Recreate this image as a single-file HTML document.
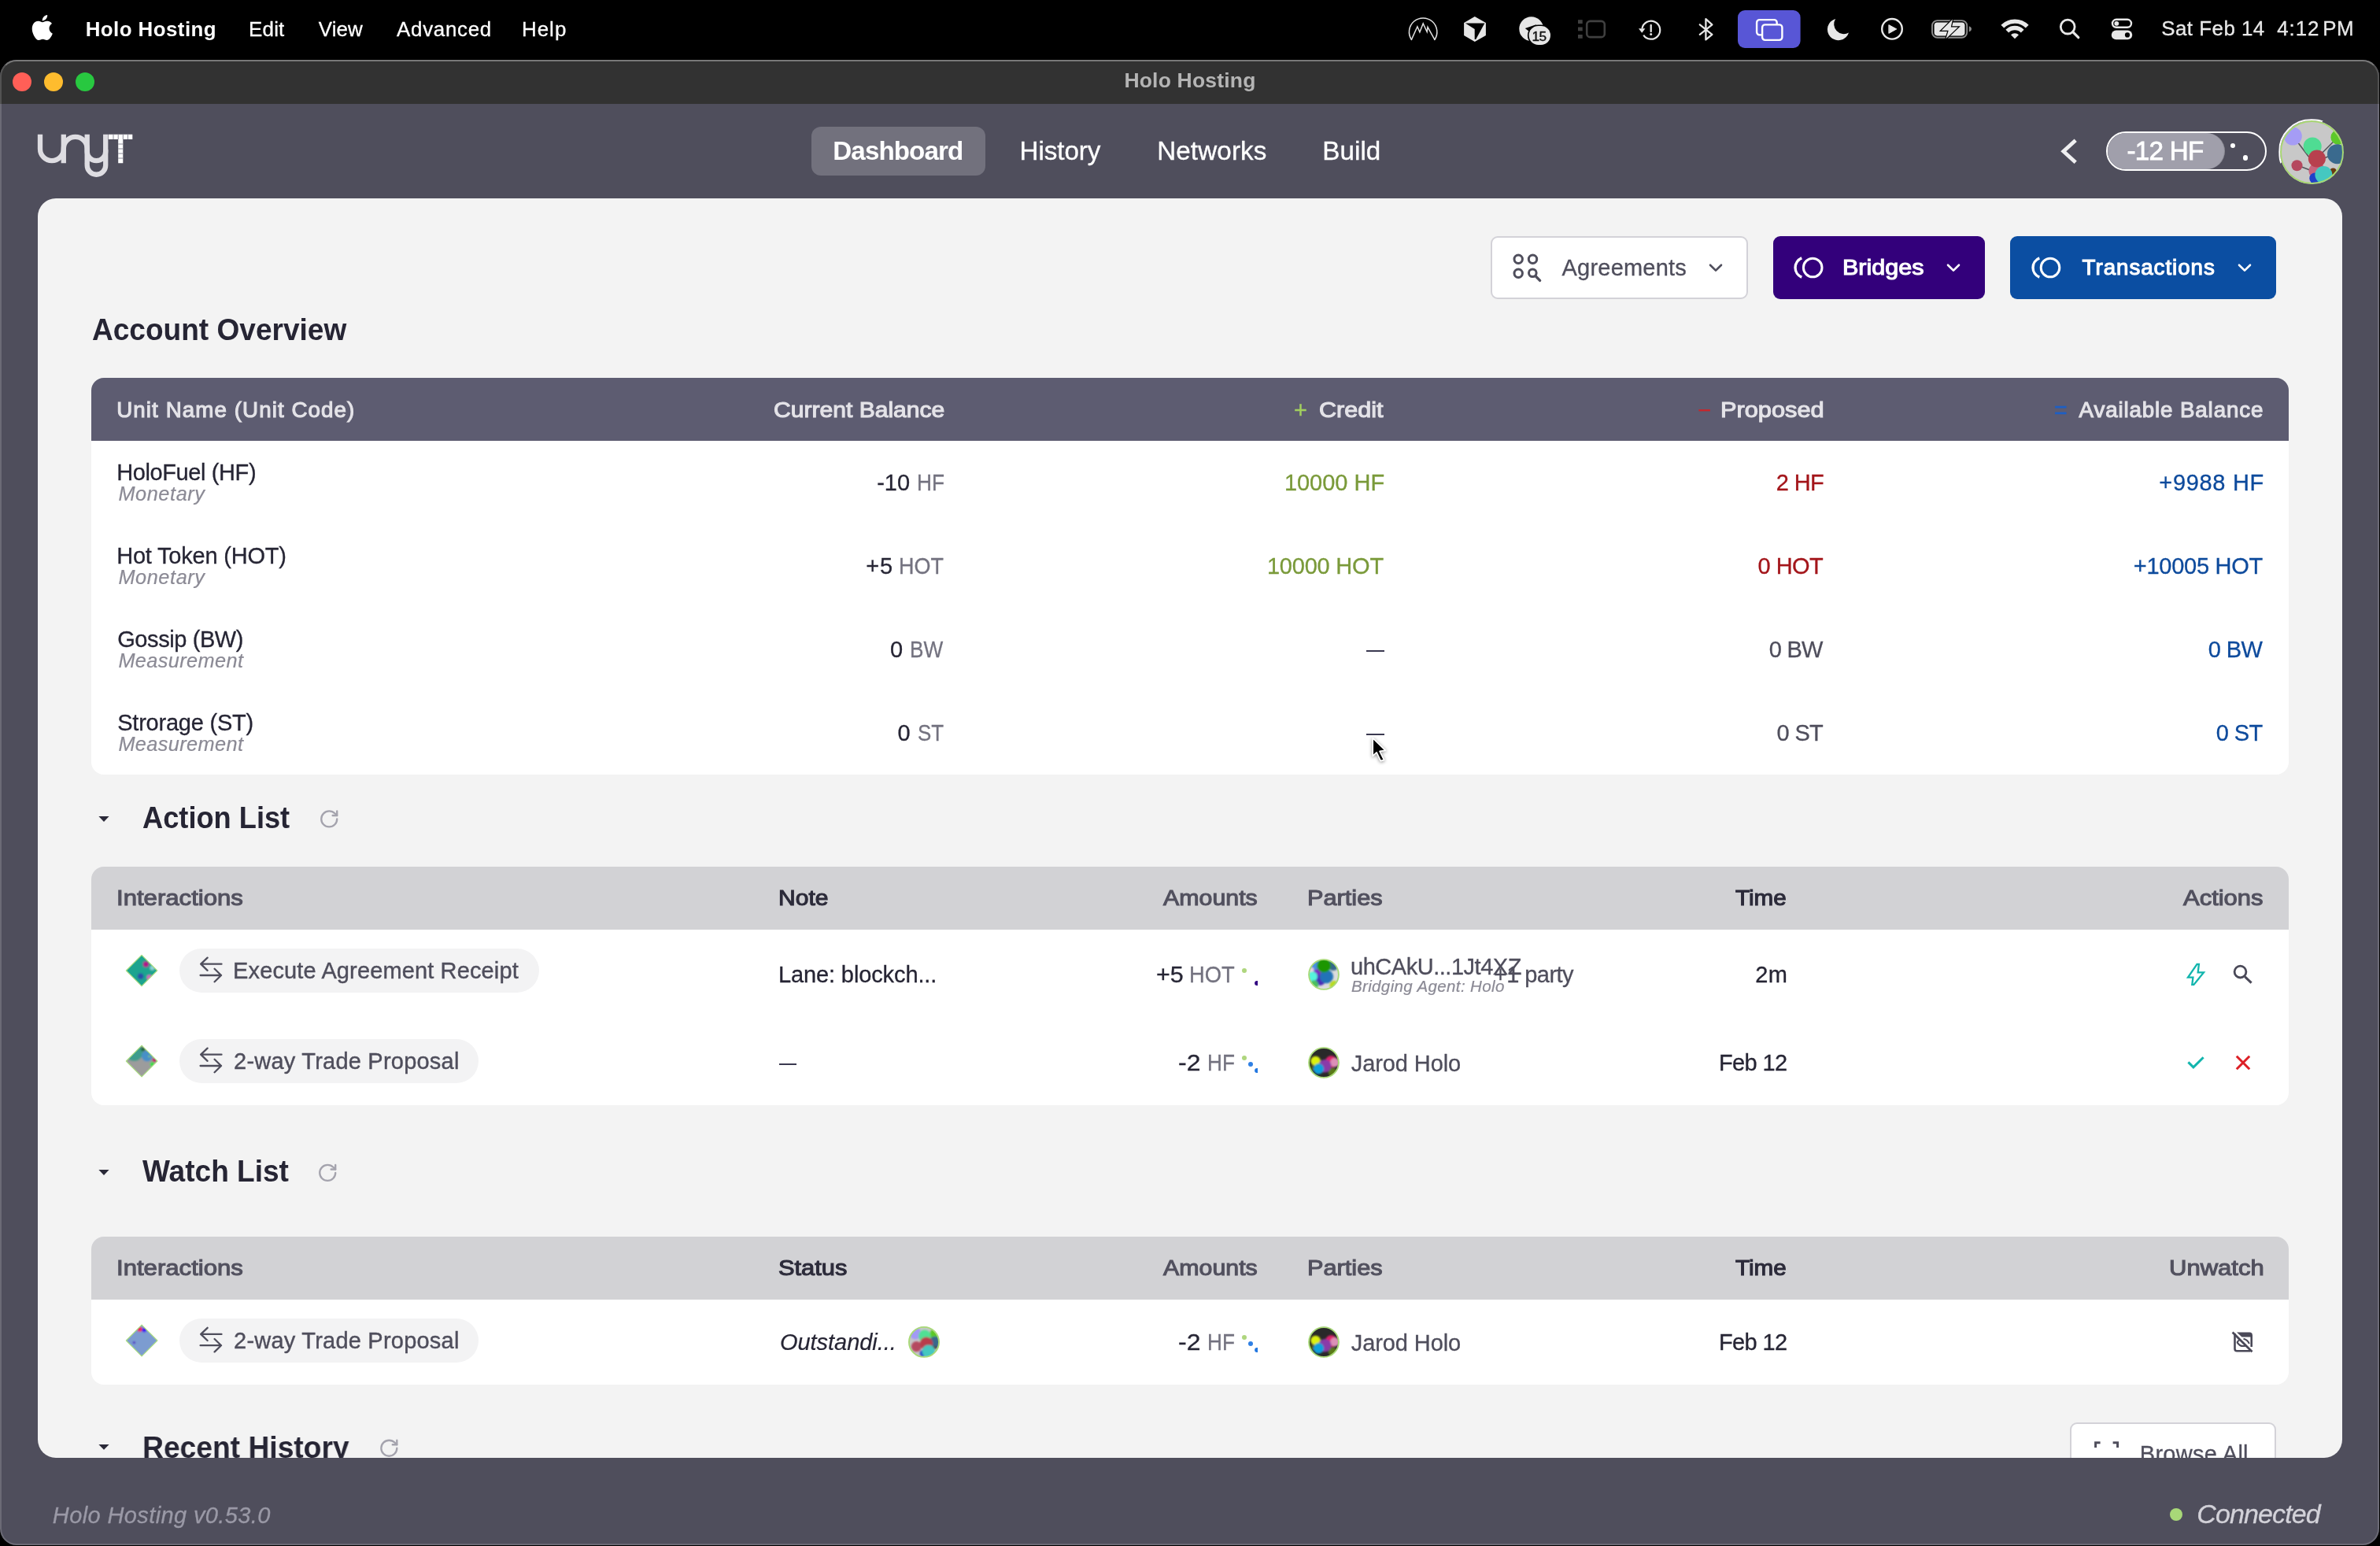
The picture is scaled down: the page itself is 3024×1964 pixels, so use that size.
<!DOCTYPE html>
<html lang="en"><head><meta charset="utf-8"><title>Holo Hosting</title>
<style>
html,body{margin:0;padding:0;background:#000;}
body{width:3024px;height:1964px;position:relative;overflow:hidden;font-family:"Liberation Sans",sans-serif;}
.t{position:absolute;white-space:pre;}
#menubar,#wg{will-change:transform;}
.a{position:absolute;}
svg{position:absolute;overflow:visible;}
#window{position:absolute;left:0;top:76px;width:3023px;height:1887px;border-radius:21px;overflow:hidden;background:#4f4e5c;}
#wg{position:absolute;left:0;top:-76px;width:3024px;height:1964px;}
#titlebar{position:absolute;left:0;top:76px;width:3024px;height:56px;background:#323232;}
#wborder{position:absolute;left:0;top:76px;width:3019px;height:1883px;border-radius:21px;border:2px solid rgba(255,255,255,.16);border-top-color:rgba(255,255,255,.34);pointer-events:none;}
.tl{position:absolute;top:16px;width:24px;height:24px;border-radius:50%;}
#card{position:absolute;left:48px;top:252px;width:2928px;height:1600px;border-radius:23px;overflow:hidden;background:#f3f3f3;}
#cg{position:absolute;left:-48px;top:-252px;width:3024px;height:1964px;}
.btn{position:absolute;top:300px;height:79.5px;border-radius:9px;box-sizing:border-box;}
.th{position:absolute;left:116px;width:2792px;border-radius:16px 16px 0 0;}
.tb{position:absolute;left:116px;width:2792px;border-radius:0 0 16px 16px;background:#fff;}
.chip{position:absolute;left:228px;height:56px;border-radius:28px;background:#f3f3f4;}
.dash{position:absolute;height:2.3px;background:#3a3950;}
.dot{position:absolute;border-radius:50%;}
.av{position:absolute;border-radius:50%;overflow:hidden;}
</style></head>
<body>
<!-- ================= macOS menu bar ================= -->
<div id="menubar" class="a" style="left:0;top:0;width:3024px;height:76px;background:#000;">
<svg style="left:41px;top:18.5px" width="26.5" height="32" viewBox="3 0 18.7 24"><path fill="#fff" d="M12.152 6.896c-.948 0-2.415-1.078-3.96-1.04-2.04.027-3.91 1.183-4.961 3.014-2.117 3.675-.546 9.103 1.519 12.09 1.013 1.454 2.208 3.09 3.792 3.039 1.52-.065 2.09-.987 3.935-.987 1.831 0 2.35.987 3.96.948 1.637-.026 2.676-1.48 3.676-2.948 1.156-1.688 1.636-3.325 1.662-3.415-.039-.013-3.182-1.221-3.22-4.857-.026-3.04 2.48-4.494 2.597-4.559-1.429-2.09-3.623-2.324-4.39-2.376-2-.156-3.675 1.09-4.61 1.09zM15.53 3.83c.843-1.012 1.4-2.427 1.245-3.83-1.207.052-2.662.805-3.532 1.818-.78.896-1.454 2.338-1.273 3.714 1.338.104 2.715-.688 3.559-1.701"/></svg>
<span class="t" style="left:108.7px;top:23px;font-size:25.9px;line-height:28px;color:#ffffff;font-weight:700;letter-spacing:0.44px;">Holo Hosting</span>
<span class="t" style="left:316.0px;top:23px;font-size:25.9px;line-height:28px;color:#ffffff;letter-spacing:0.23px;-webkit-text-stroke:0.3px #ffffff;">Edit</span>
<span class="t" style="left:404.8px;top:23px;font-size:25.9px;line-height:28px;color:#ffffff;letter-spacing:0.05px;-webkit-text-stroke:0.3px #ffffff;">View</span>
<span class="t" style="left:504.1px;top:23px;font-size:25.9px;line-height:28px;color:#ffffff;letter-spacing:0.71px;-webkit-text-stroke:0.3px #ffffff;">Advanced</span>
<span class="t" style="left:662.9px;top:23px;font-size:25.9px;line-height:28px;color:#ffffff;letter-spacing:1.05px;-webkit-text-stroke:0.3px #ffffff;">Help</span>
<span class="t" style="left:2746.2px;top:22px;font-size:25.9px;line-height:28px;color:#e9e9e9;letter-spacing:0.49px;-webkit-text-stroke:0.3px #e9e9e9;">Sat Feb 14</span>
<span class="t" style="left:2893.2px;top:22px;font-size:25.9px;line-height:28px;color:#e9e9e9;letter-spacing:0.97px;-webkit-text-stroke:0.3px #e9e9e9;">4:12</span>
<span class="t" style="left:2951.2px;top:22px;font-size:25.9px;line-height:28px;color:#e9e9e9;letter-spacing:0.63px;-webkit-text-stroke:0.3px #e9e9e9;">PM</span>
<svg style="left:0;top:0" width="3024" height="76" viewBox="0 0 3024 76" fill="none" stroke-linecap="round" stroke-linejoin="round">
<!-- mountain -->
<path d="M1793.4 50.4 A17.7 17.7 0 1 1 1822.9 50.4" stroke="#e2e2e2" stroke-width="1.5"/>
<path d="M1793.4 50.4 L1800.9 33.8 L1803.9 40.8 L1808.2 29.9 L1813.1 40.5 L1814 34.3 L1822.9 50.4" stroke="#e2e2e2" stroke-width="1.5" stroke-linejoin="miter"/>
<!-- cube -->
<path d="M1873.8 21.1 L1887.9 29 L1887.9 45.1 L1873.8 53 L1860.1 45.1 L1860.1 29 Z" fill="#e6e6e6" stroke="none"/>
<path d="M1861.9 29.4 L1886.4 29.4 L1875.2 49.9 L1873.7 49.9 L1873.7 37.1 Z" fill="#000" stroke="none"/>
<!-- circle 15 -->
<circle cx="1945.7" cy="36.7" r="15.4" fill="#e6e6e6" stroke="none"/>
<path d="M1937.8 36.1 L1952.4 31.1 L1942.6 39.8 Z" fill="#000" stroke="none"/>
<rect x="1940.9" y="31.4" width="30.8" height="27.2" rx="13.6" fill="#000" stroke="none"/>
<rect x="1942.6" y="33.1" width="27.4" height="23.8" rx="11.9" fill="#e6e6e6" stroke="none"/>
<!-- dim rect -->
<rect x="2016.2" y="26.9" width="22.6" height="20.2" rx="4.2" stroke="#404040" stroke-width="2.6"/>
<g fill="#404040" stroke="none"><rect x="2005" y="25.2" width="5.7" height="4.8"/><rect x="2005" y="34.5" width="5.7" height="4.8"/><rect x="2005" y="44" width="5.7" height="4.8"/></g>
<!-- clock alert -->
<path d="M2086.4 36.4 A11.5 11.5 0 1 1 2088.2 44.6" stroke="#e6e6e6" stroke-width="2.2" stroke-linecap="butt"/>
<path d="M2082 36.2 L2090.4 36.2 L2086.2 41.8 Z" fill="#e6e6e6" stroke="none"/>
<path d="M2097.7 31.9 V40" stroke="#e6e6e6" stroke-width="2.3"/><circle cx="2097.7" cy="43.6" r="1.5" fill="#e6e6e6" stroke="none"/>
<!-- bluetooth -->
<path d="M2159.8 31.3 L2175.4 43.8 L2167.4 50.4 V24.2 L2175.4 31.3 L2159.8 43.8" stroke="#e6e6e6" stroke-width="2.3" stroke-linejoin="round"/>
<!-- screen mirroring active -->
<rect x="2208" y="13" width="79.6" height="48" rx="9" fill="#5856d6" stroke="none"/>
<rect x="2232.1" y="25.1" width="25.6" height="19.3" rx="3.6" stroke="#fff" stroke-width="2.4"/>
<rect x="2239.1" y="31.4" width="25.3" height="19.5" rx="3.6" fill="#5856d6" stroke="#fff" stroke-width="2.4"/>
<!-- moon -->
<path d="M2332.13 23.89 A13.9 13.9 0 1 0 2349.03 41.55 A12.6 12.6 0 0 1 2332.13 23.89 Z" fill="#e8e8e8" stroke="none"/>
<!-- play -->
<circle cx="2404" cy="36.8" r="12.8" stroke="#e8e8e8" stroke-width="2.4"/>
<path d="M2400.2 31.8 L2409.8 36.9 L2400.2 42.2 Z" fill="#e8e8e8" stroke="#e8e8e8" stroke-width="1" stroke-linejoin="round"/>
<!-- battery -->
<rect x="2455" y="26.1" width="44.2" height="21.6" rx="6.6" stroke="#8c8c8c" stroke-width="1.9"/>
<rect x="2457.6" y="28.5" width="38.9" height="16.9" rx="3.8" fill="#e6e6e6" stroke="none"/>
<path d="M2501.9 33.2 Q2505 34.4 2505 36.9 Q2505 39.4 2501.9 40.6 Z" fill="#8c8c8c" stroke="none"/>
<path d="M2481 24.6 L2466.7 38.8 H2475.7 L2472.5 49.2 L2487.9 34.5 H2478.8 Z" fill="#e8e8e8" stroke="#000" stroke-width="2.4" stroke-linejoin="miter" paint-order="stroke"/>
<!-- wifi -->
<g stroke="#e8e8e8" stroke-linecap="butt">
<path d="M2544.3 33.6 A22.2 22.2 0 0 1 2575.7 33.6" stroke-width="5.4"/>
<path d="M2550.3 39.6 A13.7 13.7 0 0 1 2569.7 39.6" stroke-width="5.4"/>
</g>
<path d="M2560 49.3 L2555 44.3 A7 7 0 0 1 2565 44.3 Z" fill="#e8e8e8" stroke="none"/>
<!-- search -->
<circle cx="2627.2" cy="34.1" r="8.9" stroke="#e8e8e8" stroke-width="2.8"/>
<path d="M2633.8 40.7 L2640.8 47.7" stroke="#e8e8e8" stroke-width="3.2"/>
<!-- control center -->
<rect x="2684" y="24.8" width="24" height="10" rx="5" stroke="#e8e8e8" stroke-width="2.4"/>
<circle cx="2689.3" cy="29.8" r="2.9" fill="#e8e8e8" stroke="none"/>
<rect x="2682.8" y="38.6" width="26.4" height="11.6" rx="5.8" fill="#e8e8e8" stroke="none"/>
<circle cx="2703" cy="44.4" r="3.1" fill="#000" stroke="none"/>
</svg>
<span class="t" style="left:1946.6px;top:35.6px;font-size:17.3px;line-height:20px;color:#111;letter-spacing:-0.6px;-webkit-text-stroke:.35px #111">15</span>
</div>

<!-- ================= app window ================= -->
<div id="window"><div id="wg">
<div id="titlebar">
<div class="tl" style="left:16px;background:#ff5f57"></div>
<div class="tl" style="left:56px;background:#febc2e"></div>
<div class="tl" style="left:96px;background:#28c840"></div>
</div>
<span class="t" style="left:1428.4px;top:87px;font-size:26.5px;line-height:30px;color:#b4b4b4;font-weight:700;letter-spacing:0.19px;">Holo Hosting</span>

<!-- header -->
<svg style="left:0;top:132px" width="400" height="120" viewBox="0 132 400 120" fill="none">
<g stroke="#deDDe2" stroke-width="6.3">
<path d="M51 170.7 V189.2 A14.9 14.9 0 0 0 80.8 189.2 V170.7"/>
<path d="M80.8 207.3 V188.8 A14.95 14.95 0 0 1 110.7 188.8 V207.3"/>
<path d="M110.7 170.7 V192.4 A11.75 11.75 0 0 0 134.2 192.4 V170.7"/>
<path d="M134.2 190 V210 A11.75 11.75 0 0 1 110.7 210 V207"/>
</g>
<path d="M137.8 170.7 H168.3 V177 H156.3 V207.3 H150.2 V177 H137.8 Z" fill="#fff"/>
<g stroke="#8a8996" stroke-width="1"><path d="M144 170.7V177M150.2 170.7V177M156.3 170.7V177M162.4 170.7V177M150.2 183H156.3M150.2 189H156.3M150.2 195H156.3M150.2 201H156.3"/></g>
</svg>
<div class="a" style="left:1031px;top:161px;width:221px;height:62px;border-radius:12px;background:#72717d"></div>
<svg style="left:2600px;top:160px" width="60" height="66" viewBox="2600 160 60 66" fill="none"><path d="M2637.2 178.2 L2621.8 192.2 L2637.2 206.2" stroke="#efeff1" stroke-width="4.8"/></svg>
<div class="a" style="left:2676px;top:167px;width:204px;height:50px;border-radius:25px;border:2.5px solid #fff;box-sizing:border-box"></div>
<div class="a" style="left:2678px;top:169px;width:148px;height:46px;border-radius:23px;background:#a09fab;box-shadow:1px 0 0 rgba(255,255,255,.35)"></div>
<div class="dot" style="left:2833.6px;top:182px;width:6.4px;height:6.4px;background:#fff"></div>
<div class="dot" style="left:2849.8px;top:197.3px;width:6.4px;height:6.4px;background:#fff"></div>
<!-- profile avatar -->
<div class="av" style="left:2896.7px;top:152.5px;width:81px;height:81px;background:#c8c8c8;">
<svg style="left:0;top:0;filter:blur(.7px)" width="81" height="81" viewBox="2896.7 152.5 81 81">
<g stroke="#55555a" stroke-width="1.6" fill="none"><path d="M2916 176 L2938 205 M2944 200 L2968 176 M2945 203 L2962 197 M2920 210 L2936 216 M2950 202 L2948 218"/></g>
<circle cx="2913" cy="172.5" r="11.5" fill="#a59cf5"/>
<circle cx="2970.6" cy="173.9" r="9.5" fill="#5dc82a"/>
<circle cx="2937.9" cy="185.5" r="11.5" fill="#4fdc93"/>
<circle cx="2969.2" cy="195.2" r="12.5" fill="#3a6a8e"/>
<circle cx="2943.6" cy="216.6" r="10.5" fill="#c8647e"/>
<circle cx="2943.6" cy="201" r="11" fill="#b8404e"/>
<circle cx="2918.2" cy="209.7" r="7" fill="#b5485e"/>
<circle cx="2964.2" cy="217.5" r="4.5" fill="#6a3a10"/>
<circle cx="2941" cy="226" r="7" fill="#2040c8"/>
<circle cx="2952.1" cy="221.6" r="11" fill="#45c8c0"/>
</svg>
<div class="a" style="left:0;top:0;width:81px;height:81px;border-radius:50%;box-sizing:border-box;border:2.2px solid #a8d870"></div>
</div>
<div class="a" style="left:2895.4px;top:151.2px;width:83.6px;height:83.6px;border-radius:50%;box-sizing:border-box;border:2px solid #fff;clip-path:polygon(0 0,70% 0,0 70%)"></div>
<span class="t" style="left:1058.3px;top:173px;font-size:33.2px;line-height:37px;color:#ffffff;font-weight:700;letter-spacing:-0.92px;">Dashboard</span>
<span class="t" style="left:1295.5px;top:173px;font-size:33.2px;line-height:37px;color:#ffffff;letter-spacing:-0.05px;-webkit-text-stroke:0.35px #ffffff;">History</span>
<span class="t" style="left:1470.2px;top:173px;font-size:33.2px;line-height:37px;color:#ffffff;letter-spacing:0.13px;-webkit-text-stroke:0.35px #ffffff;">Networks</span>
<span class="t" style="left:1680.2px;top:173px;font-size:33.2px;line-height:37px;color:#ffffff;letter-spacing:0.08px;-webkit-text-stroke:0.35px #ffffff;">Build</span>
<span class="t" style="left:2702.4px;top:173px;font-size:33.2px;line-height:37px;color:#ffffff;letter-spacing:-0.69px;-webkit-text-stroke:0.8px #ffffff;">-12 HF</span>
<span class="t" style="left:66.8px;top:1909px;font-size:29.0px;line-height:32px;color:#9a99a6;font-style:italic;letter-spacing:0.39px;-webkit-text-stroke:0.3px #9a99a6;">Holo Hosting v0.53.0</span>
<span class="t" style="left:2791.2px;top:1904px;font-size:34px;line-height:38px;color:#d3d2d9;font-style:italic;letter-spacing:-0.86px;-webkit-text-stroke:0.3px #d3d2d9;">Connected</span>
<div class="dot" style="left:2756.6px;top:1915.8px;width:16.4px;height:16.4px;background:#a8d878"></div>

<!-- ================= main card ================= -->
<div id="card"><div id="cg">
<!-- toolbar buttons -->
<div class="btn" style="left:1893.5px;width:327.3px;background:#fff;border:2px solid #d3d2d8"></div>
<div class="btn" style="left:2253px;width:269px;background:#33007b"></div>
<div class="btn" style="left:2554px;width:338px;background:#0b4ea2"></div>
<svg style="left:1880px;top:300px" width="1020" height="80" viewBox="1880 300 1020 80" fill="none" stroke-linecap="round" stroke-linejoin="round">
<g stroke="#4f4e5c" stroke-width="3">
<circle cx="1929.2" cy="329.2" r="5.2"/><circle cx="1947.5" cy="329.2" r="5.2"/><circle cx="1929.2" cy="347.3" r="5.2"/><circle cx="1947.3" cy="346.8" r="4.8"/><path d="M1951 350.6 L1956.6 356.4" stroke-width="3.4"/>
<path d="M2173 336.7 L2180 343.6 L2187 336.7" stroke-width="2.6"/>
</g>
<g stroke="#fff" stroke-width="3">
<circle cx="2303.2" cy="340" r="11.8"/><path d="M2289.3 327.9 A13 13 0 0 0 2289.3 352.1" stroke-width="3.4" stroke-linecap="butt"/>
<path d="M2475 336.7 L2482 343.6 L2489 336.7" stroke-width="2.6"/>
<circle cx="2605" cy="340" r="11.8"/><path d="M2591.3 327.9 A13 13 0 0 0 2591.3 352.1" stroke-width="3.4" stroke-linecap="butt"/>
<path d="M2845 336.7 L2852 343.6 L2859 336.7" stroke-width="2.6"/>
</g>
</svg>

<!-- account overview table -->
<div class="th" style="top:480px;height:80px;background:#5d5c71"></div>
<div class="tb" style="top:560px;height:424px"></div>
<div class="dash" style="left:1736.2px;top:825.7px;width:22.8px"></div>
<div class="dash" style="left:1736.2px;top:931.7px;width:22.8px"></div>

<!-- action list -->
<svg style="left:110px;top:1020px" width="340" height="40" viewBox="110 1020 340 40" fill="none"><path d="M125.4 1037.1 H138.6 L132 1043.9 Z" fill="#2a2938"/>
<g transform="translate(404.9 1027.1) scale(1.11)" stroke="#a4a3ad" stroke-width="2.1" stroke-linecap="round" stroke-linejoin="round"><path d="M21 12a9 9 0 1 1-9-9c2.52 0 4.93 1 6.74 2.74L21 8"/><path d="M21 3v5h-5"/></g></svg>
<div class="th" style="top:1101px;height:80px;background:#d2d2d5"></div>
<div class="tb" style="top:1181px;height:223px"></div>
<div class="chip" style="top:1204.8px;width:456.8px"></div>
<div class="chip" style="top:1319.8px;width:379.5px"></div>
<div class="dash" style="left:989.5px;top:1350.7px;width:22.6px"></div>

<!-- watch list -->
<svg style="left:110px;top:1470px" width="340" height="40" viewBox="110 1470 340 40" fill="none"><path d="M125.4 1486.1 H138.6 L132 1492.9 Z" fill="#2a2938"/>
<g transform="translate(402.9 1476.6) scale(1.11)" stroke="#a4a3ad" stroke-width="2.1" stroke-linecap="round" stroke-linejoin="round"><path d="M21 12a9 9 0 1 1-9-9c2.52 0 4.93 1 6.74 2.74L21 8"/><path d="M21 3v5h-5"/></g></svg>
<div class="th" style="top:1571px;height:80px;background:#d2d2d5"></div>
<div class="tb" style="top:1651px;height:108px"></div>
<div class="chip" style="top:1675px;width:379.5px"></div>

<!-- recent history (clipped) -->
<svg style="left:110px;top:1820px" width="420" height="40" viewBox="110 1820 420 40" fill="none"><path d="M125.4 1835 H138.6 L132 1841.8 Z" fill="#2a2938"/>
<g transform="translate(481 1826.4) scale(1.11)" stroke="#a4a3ad" stroke-width="2.1" stroke-linecap="round" stroke-linejoin="round"><path d="M21 12a9 9 0 1 1-9-9c2.52 0 4.93 1 6.74 2.74L21 8"/><path d="M21 3v5h-5"/></g></svg>
<div class="a" style="left:2630px;top:1806.6px;width:262px;height:80px;border-radius:9px;background:#fff;border:2px solid #d3d2d8;box-sizing:border-box"></div>
<svg style="left:2650px;top:1825px" width="50" height="30" viewBox="2650 1825 50 30" fill="none"><path d="M2662.6 1839 V1832.8 H2668.6 M2684.6 1832.8 H2690.6 V1839" stroke="#4f4e5c" stroke-width="3"/></svg>

<!-- row glyphs -->
<svg style="left:100px;top:1190px" width="2820" height="560" viewBox="100 1190 2820 560" fill="none" stroke-linecap="round" stroke-linejoin="round">
<defs>
<filter id="bl" x="-20%" y="-20%" width="140%" height="140%"><feGaussianBlur stdDeviation="0.8"/></filter>
<clipPath id="d1"><path d="M180 1213.3 L199.7 1233 L180 1252.7 L160.3 1233 Z"/></clipPath>
<clipPath id="d2"><path d="M180 1328.3 L199.7 1348 L180 1367.7 L160.3 1348 Z"/></clipPath>
<clipPath id="d3"><path d="M180 1683.3 L199.7 1703 L180 1722.7 L160.3 1703 Z"/></clipPath>
</defs>
<!-- diamond 1 -->
<g clip-path="url(#d1)"><g filter="url(#bl)"><rect x="158" y="1211" width="44" height="44" fill="#1fa48f"/><circle cx="185.4" cy="1225" r="3.8" fill="#b0188a"/><circle cx="178.6" cy="1240.3" r="3.8" fill="#2a4fa8"/><circle cx="190" cy="1242" r="3.4" fill="#d868c0"/><circle cx="193.5" cy="1229.5" r="3" fill="#8ad0d8"/></g></g>
<path d="M180 1213.3 L199.7 1233 L180 1252.7 L160.3 1233 Z" stroke="#aadd80" stroke-width="1.15"/>
<!-- diamond 2 -->
<g clip-path="url(#d2)"><g filter="url(#bl)"><rect x="158" y="1326" width="44" height="44" fill="#9c9c9c"/><circle cx="170.5" cy="1337" r="11" fill="#3d9c8c"/><circle cx="181.8" cy="1333" r="2.8" fill="#1f6a40"/><circle cx="186.8" cy="1341.5" r="6.9" fill="#4690c8"/><circle cx="196.2" cy="1346.6" r="2.6" fill="#c0186a"/><circle cx="193.4" cy="1352" r="2.7" fill="#30e040"/><circle cx="189.5" cy="1342" r="1.2" fill="#8ad070"/></g></g>
<path d="M180.1 1328.2 L199.9 1348 L180.1 1367.8 L160.3 1348 Z" stroke="#aadd80" stroke-width="1.15"/>
<!-- diamond 3 -->
<g clip-path="url(#d3)"><g filter="url(#bl)"><rect x="158" y="1681" width="44" height="44" fill="#7c9cd0"/><circle cx="177.6" cy="1688.6" r="3.2" fill="#f0205a"/><circle cx="183.2" cy="1689.7" r="2.8" fill="#4010f0"/><circle cx="170.4" cy="1705.6" r="1.7" fill="#4a18c0"/></g></g>
<path d="M180.1 1683.2 L199.9 1703 L180.1 1722.8 L160.3 1703 Z" stroke="#aadd80" stroke-width="1.15"/>
<!-- swap arrows in chips -->
<g stroke="#4f4e5c" stroke-width="2.3">
<path d="M281.5 1224.7 H255.2 M263.6 1216.6 L255.2 1224.7 L263.6 1232.8 M254.6 1239 H281 M272.6 1230.8 L281 1239 L272.6 1247.2"/>
<path d="M281.5 1339.7 H255.2 M263.6 1331.6 L255.2 1339.7 L263.6 1347.8 M254.6 1354 H281 M272.6 1345.8 L281 1354 L272.6 1362.2"/>
<path d="M281.5 1694.9 H255.2 M263.6 1686.8 L255.2 1694.9 L263.6 1703 M254.6 1709.2 H281 M272.6 1701 L281 1709.2 L272.6 1717.4"/>
</g>
<!-- action icons -->
<path d="M2791.5 1224.9 H2793.9 L2792.7 1235.4 H2800 L2787.4 1250.9 H2785.3 L2786.4 1241.6 H2780 Z" stroke="#12b5ad" stroke-width="2.3" stroke-linejoin="miter" stroke-linecap="butt"/>
<circle cx="2846.5" cy="1234.6" r="7.4" stroke="#4a4958" stroke-width="2.8"/><path d="M2852.2 1240.6 L2860.6 1248.6" stroke="#4a4958" stroke-width="3" stroke-linecap="butt"/>
<path d="M2780.4 1349.4 L2786.9 1355.9 L2799.6 1343.2" stroke="#12b5ad" stroke-width="3" stroke-linecap="butt" stroke-linejoin="miter"/>
<path d="M2841.8 1341.8 L2858.2 1358.2 M2858.2 1341.8 L2841.8 1358.2" stroke="#dc1f26" stroke-width="3" stroke-linecap="butt"/>
<!-- unwatch -->
<g stroke="#4a4958" stroke-width="2.6" stroke-linecap="butt">
<path d="M2839.5 1694 V1713.5 Q2839.5 1716.3 2842.3 1716.3 H2859" />
<path d="M2860.7 1711 V1696" />
<path d="M2842 1692.5 H2858.3 Q2861.9 1692.5 2861.9 1696 V1698.5 H2848.5 Z" fill="#4a4958" stroke="none"/>
<path d="M2836.6 1692.4 L2861.5 1717.3" stroke-width="2.8"/>
<path d="M2850.5 1700.8 Q2856 1702 2857.8 1707" stroke-width="2.2"/>
<path d="M2845 1702.5 Q2842.5 1704.6 2842.8 1705.6 Q2846.5 1711.5 2853.5 1709.5" stroke-width="2.2"/>
</g>
</svg>

<!-- amount dots + party avatars -->
<svg style="left:1100px;top:1200px" width="700" height="560" viewBox="1100 1200 700 560">
<defs><filter id="bl2" x="-20%" y="-20%" width="140%" height="140%"><feGaussianBlur stdDeviation="0.9"/></filter><clipPath id="dc"><rect x="1500" y="1200" width="98" height="560"/></clipPath></defs>
<g clip-path="url(#dc)">
<circle cx="1581" cy="1232.9" r="3" fill="#afd67e"/><circle cx="1597.1" cy="1249" r="3" fill="#300080"/>
<circle cx="1581" cy="1344" r="3" fill="#afd67e"/><circle cx="1589" cy="1352" r="3" fill="#2f80e4"/><circle cx="1597.1" cy="1360" r="3" fill="#2277e0"/>
<circle cx="1581" cy="1699" r="3" fill="#afd67e"/><circle cx="1589" cy="1707" r="3" fill="#2f80e4"/><circle cx="1597.1" cy="1715" r="3" fill="#2277e0"/>
</g>
<clipPath id="c1"><circle cx="1682" cy="1238" r="19.25"/></clipPath>
<circle cx="1682" cy="1238" r="19.25" fill="#dcdcdc"/>
<g clip-path="url(#c1)"><g filter="url(#bl2)">
<circle cx="1670.09" cy="1226.09" r="6.95" fill="#4a8fe0"/>
<circle cx="1693.91" cy="1226.09" r="6.95" fill="#35678a"/>
<circle cx="1666.62" cy="1231.55" r="2.58" fill="#e6cfe0"/>
<circle cx="1676.54" cy="1240.48" r="9.93" fill="#7a2cc0"/>
<circle cx="1677.53" cy="1244.95" r="6.95" fill="#4a2ab8"/>
<circle cx="1667.71" cy="1240.58" r="6.25" fill="#55f5dc"/>
<circle cx="1669.59" cy="1250.90" r="5.56" fill="#4cc060"/>
<circle cx="1694.90" cy="1251.40" r="5.56" fill="#b8dc20"/>
<circle cx="1685.47" cy="1240.58" r="8.63" fill="#2272b8"/>
<circle cx="1682.10" cy="1226.69" r="8.93" fill="#1f9606"/>
</g></g>
<circle cx="1682" cy="1238" r="18.90" fill="none" stroke="#a9da78" stroke-width="1.9"/>
<clipPath id="c2"><circle cx="1682" cy="1350" r="19.25"/></clipPath>
<circle cx="1682" cy="1350" r="19.25" fill="#292929"/>
<g clip-path="url(#c2)"><g filter="url(#bl2)">
<circle cx="1667.11" cy="1357.44" r="3.18" fill="#4a5a10"/>
<circle cx="1693.41" cy="1362.41" r="5.56" fill="#5a7a18"/>
<circle cx="1671.58" cy="1347.92" r="6.25" fill="#dcf010"/>
<circle cx="1691.33" cy="1348.81" r="7.54" fill="#e0206a"/>
<circle cx="1695.89" cy="1349.70" r="5.76" fill="#dc90b8"/>
<circle cx="1683.29" cy="1354.17" r="8.24" fill="#8a3aa8"/>
<circle cx="1675.45" cy="1357.74" r="6.65" fill="#0ca0dc"/>
</g></g>
<circle cx="1682" cy="1350" r="18.90" fill="none" stroke="#a9da78" stroke-width="1.9"/>
<clipPath id="c3"><circle cx="1682" cy="1705" r="19.25"/></clipPath>
<circle cx="1682" cy="1705" r="19.25" fill="#292929"/>
<g clip-path="url(#c3)"><g filter="url(#bl2)">
<circle cx="1667.11" cy="1712.44" r="3.18" fill="#4a5a10"/>
<circle cx="1693.41" cy="1717.41" r="5.56" fill="#5a7a18"/>
<circle cx="1671.58" cy="1702.92" r="6.25" fill="#dcf010"/>
<circle cx="1691.33" cy="1703.81" r="7.54" fill="#e0206a"/>
<circle cx="1695.89" cy="1704.70" r="5.76" fill="#dc90b8"/>
<circle cx="1683.29" cy="1709.17" r="8.24" fill="#8a3aa8"/>
<circle cx="1675.45" cy="1712.74" r="6.65" fill="#0ca0dc"/>
</g></g>
<circle cx="1682" cy="1705" r="18.90" fill="none" stroke="#a9da78" stroke-width="1.9"/>
<clipPath id="c4"><circle cx="1174" cy="1704.9" r="19.35"/></clipPath>
<circle cx="1174" cy="1704.9" r="19.35" fill="#c6c6c6"/>
<g clip-path="url(#c4)"><g filter="url(#bl2)">
<circle cx="1163.03" cy="1693.93" r="7.58" fill="#a29af5"/>
<circle cx="1188.56" cy="1694.92" r="7.18" fill="#5cc828"/>
<circle cx="1174.80" cy="1697.32" r="7.78" fill="#50e094"/>
<circle cx="1187.96" cy="1705.50" r="7.78" fill="#38688c"/>
<circle cx="1164.42" cy="1710.69" r="6.58" fill="#b5485e"/>
<circle cx="1176.99" cy="1706.60" r="8.18" fill="#b83e4c"/>
<circle cx="1188.16" cy="1712.08" r="1.90" fill="#5a3a10"/>
<circle cx="1172.80" cy="1719.26" r="4.19" fill="#2848c8"/>
<circle cx="1179.79" cy="1716.57" r="8.18" fill="#45c8c0"/>
</g></g>
<circle cx="1174" cy="1704.9" r="19.00" fill="none" stroke="#a9da78" stroke-width="1.9"/>
</svg>

<svg style="left:1730px;top:930px;filter:drop-shadow(0 1.5px 2px rgba(0,0,0,.45))" width="40" height="46" viewBox="1730 930 40 46"><path d="M1744.2 937.6 V960.4 L1749.1 955.9 L1754.2 966.6 L1758.6 965.4 L1753 954.4 L1760.4 953.4 Z" fill="#000" stroke="#fff" stroke-width="1.7" stroke-linejoin="round"/></svg>
<span class="t" style="left:1984.5px;top:324px;font-size:29.0px;line-height:32px;color:#4f4e5c;letter-spacing:0.22px;-webkit-text-stroke:0.3px #4f4e5c;">Agreements</span>
<span class="t" style="left:2341.4px;top:324px;font-size:27.72px;line-height:31px;color:#ffffff;-webkit-text-stroke:1.1px #ffffff;transform:scaleX(1.101);transform-origin:0 50%;">Bridges</span>
<span class="t" style="left:2645.6px;top:324px;font-size:27.72px;line-height:31px;color:#ffffff;letter-spacing:0.96px;-webkit-text-stroke:1.1px #ffffff;">Transactions</span>
<span class="t" style="left:116.8px;top:397px;font-size:39px;line-height:43px;color:#262534;font-weight:700;transform:scaleX(0.950);transform-origin:0 50%;">Account Overview</span>
<span class="t" style="left:148.2px;top:505px;font-size:27.72px;line-height:31px;color:#e4e3e8;letter-spacing:1.09px;-webkit-text-stroke:1.1px #e4e3e8;">Unit Name (Unit Code)</span>
<span class="t" style="left:982.5px;top:505px;font-size:27.72px;line-height:31px;color:#e4e3e8;-webkit-text-stroke:1.1px #e4e3e8;transform:scaleX(1.085);transform-origin:0 50%;">Current Balance</span>
<span class="t" style="left:1644.1px;top:505px;font-size:29.0px;line-height:32px;color:#a2cf5e;-webkit-text-stroke:0.4px #a2cf5e;">+</span>
<span class="t" style="left:1675.5px;top:505px;font-size:27.72px;line-height:31px;color:#e4e3e8;-webkit-text-stroke:1.1px #e4e3e8;transform:scaleX(1.103);transform-origin:0 50%;">Credit</span>
<span class="t" style="left:2157.5px;top:505px;font-size:29.0px;line-height:32px;color:#c8262c;-webkit-text-stroke:0.4px #c8262c;">−</span>
<span class="t" style="left:2186.4px;top:505px;font-size:27.72px;line-height:31px;color:#e4e3e8;-webkit-text-stroke:1.1px #e4e3e8;transform:scaleX(1.109);transform-origin:0 50%;">Proposed</span>
<span class="t" style="left:2609.8px;top:505px;font-size:29.0px;line-height:32px;color:#1e5fc4;-webkit-text-stroke:0.4px #1e5fc4;">=</span>
<span class="t" style="left:2641.6px;top:505px;font-size:27.72px;line-height:31px;color:#e4e3e8;letter-spacing:0.87px;-webkit-text-stroke:1.1px #e4e3e8;">Available Balance</span>
<span class="t" style="left:148.2px;top:584px;font-size:29.0px;line-height:32px;color:#262534;letter-spacing:-0.39px;-webkit-text-stroke:0.3px #262534;">HoloFuel (HF)</span>
<span class="t" style="left:150.4px;top:613px;font-size:25.3px;line-height:28px;color:#8b8a95;font-style:italic;letter-spacing:0.59px;-webkit-text-stroke:0.2px #8b8a95;">Monetary</span>
<span class="t" style="left:148.2px;top:690px;font-size:29.0px;line-height:32px;color:#262534;letter-spacing:-0.20px;-webkit-text-stroke:0.3px #262534;">Hot Token (HOT)</span>
<span class="t" style="left:150.4px;top:719px;font-size:25.3px;line-height:28px;color:#8b8a95;font-style:italic;letter-spacing:0.59px;-webkit-text-stroke:0.2px #8b8a95;">Monetary</span>
<span class="t" style="left:149.2px;top:796px;font-size:29.0px;line-height:32px;color:#262534;letter-spacing:-0.41px;-webkit-text-stroke:0.3px #262534;">Gossip (BW)</span>
<span class="t" style="left:150.4px;top:825px;font-size:25.3px;line-height:28px;color:#8b8a95;font-style:italic;letter-spacing:0.39px;-webkit-text-stroke:0.2px #8b8a95;">Measurement</span>
<span class="t" style="left:149.2px;top:902px;font-size:29.0px;line-height:32px;color:#262534;letter-spacing:-0.22px;-webkit-text-stroke:0.3px #262534;">Strorage (ST)</span>
<span class="t" style="left:150.4px;top:931px;font-size:25.3px;line-height:28px;color:#8b8a95;font-style:italic;letter-spacing:0.39px;-webkit-text-stroke:0.2px #8b8a95;">Measurement</span>
<span class="t" style="left:1114.2px;top:597px;font-size:29.0px;line-height:32px;color:#262534;-webkit-text-stroke:0.3px #262534;">-10</span>
<span class="t" style="left:1165.2px;top:597px;font-size:29.0px;line-height:32px;color:#73727f;-webkit-text-stroke:0.3px #73727f;transform:scaleX(0.905);transform-origin:0 50%;">HF</span>
<span class="t" style="left:1100.2px;top:703px;font-size:29.0px;line-height:32px;color:#262534;letter-spacing:0.76px;-webkit-text-stroke:0.3px #262534;">+5</span>
<span class="t" style="left:1142.4px;top:703px;font-size:29.0px;line-height:32px;color:#73727f;-webkit-text-stroke:0.3px #73727f;transform:scaleX(0.930);transform-origin:0 50%;">HOT</span>
<span class="t" style="left:1130.9px;top:809px;font-size:29.0px;line-height:32px;color:#262534;-webkit-text-stroke:0.3px #262534;">0</span>
<span class="t" style="left:1156.4px;top:809px;font-size:29.0px;line-height:32px;color:#73727f;-webkit-text-stroke:0.3px #73727f;transform:scaleX(0.903);transform-origin:0 50%;">BW</span>
<span class="t" style="left:1140.6px;top:915px;font-size:29.0px;line-height:32px;color:#262534;-webkit-text-stroke:0.3px #262534;">0</span>
<span class="t" style="left:1166.1px;top:915px;font-size:29.0px;line-height:32px;color:#73727f;-webkit-text-stroke:0.3px #73727f;transform:scaleX(0.895);transform-origin:0 50%;">ST</span>
<span class="t" style="left:1631.9px;top:597px;font-size:29.0px;line-height:32px;color:#7a9a3a;letter-spacing:-0.02px;-webkit-text-stroke:0.3px #7a9a3a;">10000 HF</span>
<span class="t" style="left:1609.9px;top:703px;font-size:29.0px;line-height:32px;color:#7a9a3a;letter-spacing:-0.21px;-webkit-text-stroke:0.3px #7a9a3a;">10000 HOT</span>
<span class="t" style="left:2256.8px;top:597px;font-size:29.0px;line-height:32px;color:#a3151a;letter-spacing:-0.64px;-webkit-text-stroke:0.3px #a3151a;">2 HF</span>
<span class="t" style="left:2233.6px;top:703px;font-size:29.0px;line-height:32px;color:#a3151a;letter-spacing:-0.55px;-webkit-text-stroke:0.3px #a3151a;">0 HOT</span>
<span class="t" style="left:2247.7px;top:809px;font-size:29.0px;line-height:32px;color:#4f4e5c;letter-spacing:-0.71px;-webkit-text-stroke:0.3px #4f4e5c;">0 BW</span>
<span class="t" style="left:2257.5px;top:915px;font-size:29.0px;line-height:32px;color:#4f4e5c;letter-spacing:-0.64px;-webkit-text-stroke:0.3px #4f4e5c;">0 ST</span>
<span class="t" style="left:2743.3px;top:597px;font-size:29.0px;line-height:32px;color:#0d4a9c;letter-spacing:0.68px;-webkit-text-stroke:0.3px #0d4a9c;">+9988 HF</span>
<span class="t" style="left:2710.8px;top:703px;font-size:29.0px;line-height:32px;color:#0d4a9c;letter-spacing:-0.27px;-webkit-text-stroke:0.3px #0d4a9c;">+10005 HOT</span>
<span class="t" style="left:2805.8px;top:809px;font-size:29.0px;line-height:32px;color:#0d4a9c;letter-spacing:-0.61px;-webkit-text-stroke:0.3px #0d4a9c;">0 BW</span>
<span class="t" style="left:2815.8px;top:915px;font-size:29.0px;line-height:32px;color:#0d4a9c;letter-spacing:-0.58px;-webkit-text-stroke:0.3px #0d4a9c;">0 ST</span>
<span class="t" style="left:181.0px;top:1017px;font-size:39px;line-height:43px;color:#262534;font-weight:700;transform:scaleX(0.929);transform-origin:0 50%;">Action List</span>
<span class="t" style="left:148.4px;top:1125px;font-size:27.72px;line-height:31px;color:#52515f;-webkit-text-stroke:1.1px #52515f;transform:scaleX(1.123);transform-origin:0 50%;">Interactions</span>
<span class="t" style="left:988.7px;top:1125px;font-size:27.72px;line-height:31px;color:#2c2b3a;-webkit-text-stroke:1.1px #2c2b3a;transform:scaleX(1.085);transform-origin:0 50%;">Note</span>
<span class="t" style="left:1477.8px;top:1125px;font-size:27.72px;line-height:31px;color:#52515f;-webkit-text-stroke:1.1px #52515f;transform:scaleX(1.095);transform-origin:0 50%;">Amounts</span>
<span class="t" style="left:1661.2px;top:1125px;font-size:27.72px;line-height:31px;color:#52515f;-webkit-text-stroke:1.1px #52515f;transform:scaleX(1.108);transform-origin:0 50%;">Parties</span>
<span class="t" style="left:2205.2px;top:1125px;font-size:27.72px;line-height:31px;color:#2c2b3a;-webkit-text-stroke:1.1px #2c2b3a;transform:scaleX(1.068);transform-origin:0 50%;">Time</span>
<span class="t" style="left:2774.4px;top:1125px;font-size:27.72px;line-height:31px;color:#52515f;-webkit-text-stroke:1.1px #52515f;transform:scaleX(1.117);transform-origin:0 50%;">Actions</span>
<span class="t" style="left:296.1px;top:1217px;font-size:29.0px;line-height:32px;color:#4f4e5c;letter-spacing:0.13px;-webkit-text-stroke:0.4px #4f4e5c;">Execute Agreement Receipt</span>
<span class="t" style="left:988.9px;top:1222px;font-size:29.0px;line-height:32px;color:#262534;letter-spacing:-0.11px;-webkit-text-stroke:0.3px #262534;">Lane: blockch...</span>
<span class="t" style="left:1468.8px;top:1222px;font-size:29.0px;line-height:32px;color:#262534;-webkit-text-stroke:0.3px #262534;transform:scaleX(1.050);transform-origin:0 50%;">+5</span>
<span class="t" style="left:1510.9px;top:1222px;font-size:29.0px;line-height:32px;color:#73727f;-webkit-text-stroke:0.3px #73727f;transform:scaleX(0.943);transform-origin:0 50%;">HOT</span>
<span class="t" style="left:1716.0px;top:1212px;font-size:29.0px;line-height:32px;color:#4f4e5c;letter-spacing:-0.47px;-webkit-text-stroke:0.3px #4f4e5c;">uhCAkU...1Jt4XZ</span>
<span class="t" style="left:1716.9px;top:1241px;font-size:20.5px;line-height:23px;color:#8b8a95;font-style:italic;letter-spacing:0.38px;-webkit-text-stroke:0.2px #8b8a95;">Bridging Agent: Holo</span>
<span class="t" style="left:1898.0px;top:1222px;font-size:29.0px;line-height:32px;color:#4f4e5c;letter-spacing:-0.60px;-webkit-text-stroke:0.3px #4f4e5c;">+1 party</span>
<span class="t" style="left:2230.3px;top:1222px;font-size:29.0px;line-height:32px;color:#262534;letter-spacing:0.37px;-webkit-text-stroke:0.3px #262534;">2m</span>
<span class="t" style="left:297.1px;top:1332px;font-size:29.0px;line-height:32px;color:#4f4e5c;letter-spacing:0.22px;-webkit-text-stroke:0.4px #4f4e5c;">2-way Trade Proposal</span>
<span class="t" style="left:1496.7px;top:1334px;font-size:29.0px;line-height:32px;color:#262534;-webkit-text-stroke:0.3px #262534;transform:scaleX(1.102);transform-origin:0 50%;">-2</span>
<span class="t" style="left:1533.8px;top:1334px;font-size:29.0px;line-height:32px;color:#73727f;-webkit-text-stroke:0.3px #73727f;transform:scaleX(0.902);transform-origin:0 50%;">HF</span>
<span class="t" style="left:1716.8px;top:1335px;font-size:29.0px;line-height:32px;color:#4f4e5c;letter-spacing:-0.10px;-webkit-text-stroke:0.3px #4f4e5c;">Jarod Holo</span>
<span class="t" style="left:2184.0px;top:1334px;font-size:29.0px;line-height:32px;color:#262534;letter-spacing:-0.65px;-webkit-text-stroke:0.3px #262534;">Feb 12</span>
<span class="t" style="left:181.0px;top:1466px;font-size:39px;line-height:43px;color:#262534;font-weight:700;transform:scaleX(0.950);transform-origin:0 50%;">Watch List</span>
<span class="t" style="left:148.4px;top:1595px;font-size:27.72px;line-height:31px;color:#52515f;-webkit-text-stroke:1.1px #52515f;transform:scaleX(1.123);transform-origin:0 50%;">Interactions</span>
<span class="t" style="left:988.5px;top:1595px;font-size:27.72px;line-height:31px;color:#2c2b3a;-webkit-text-stroke:1.1px #2c2b3a;transform:scaleX(1.112);transform-origin:0 50%;">Status</span>
<span class="t" style="left:1477.8px;top:1595px;font-size:27.72px;line-height:31px;color:#52515f;-webkit-text-stroke:1.1px #52515f;transform:scaleX(1.095);transform-origin:0 50%;">Amounts</span>
<span class="t" style="left:1661.2px;top:1595px;font-size:27.72px;line-height:31px;color:#52515f;-webkit-text-stroke:1.1px #52515f;transform:scaleX(1.108);transform-origin:0 50%;">Parties</span>
<span class="t" style="left:2205.2px;top:1595px;font-size:27.72px;line-height:31px;color:#2c2b3a;-webkit-text-stroke:1.1px #2c2b3a;transform:scaleX(1.068);transform-origin:0 50%;">Time</span>
<span class="t" style="left:2755.8px;top:1595px;font-size:27.72px;line-height:31px;color:#52515f;-webkit-text-stroke:1.1px #52515f;transform:scaleX(1.119);transform-origin:0 50%;">Unwatch</span>
<span class="t" style="left:297.1px;top:1687px;font-size:29.0px;line-height:32px;color:#4f4e5c;letter-spacing:0.22px;-webkit-text-stroke:0.4px #4f4e5c;">2-way Trade Proposal</span>
<span class="t" style="left:991.0px;top:1689px;font-size:29.0px;line-height:32px;color:#262534;font-style:italic;letter-spacing:-0.05px;-webkit-text-stroke:0.2px #262534;">Outstandi...</span>
<span class="t" style="left:1496.7px;top:1689px;font-size:29.0px;line-height:32px;color:#262534;-webkit-text-stroke:0.3px #262534;transform:scaleX(1.102);transform-origin:0 50%;">-2</span>
<span class="t" style="left:1533.8px;top:1689px;font-size:29.0px;line-height:32px;color:#73727f;-webkit-text-stroke:0.3px #73727f;transform:scaleX(0.902);transform-origin:0 50%;">HF</span>
<span class="t" style="left:1716.8px;top:1690px;font-size:29.0px;line-height:32px;color:#4f4e5c;letter-spacing:-0.10px;-webkit-text-stroke:0.3px #4f4e5c;">Jarod Holo</span>
<span class="t" style="left:2184.0px;top:1689px;font-size:29.0px;line-height:32px;color:#262534;letter-spacing:-0.65px;-webkit-text-stroke:0.3px #262534;">Feb 12</span>
<span class="t" style="left:181.1px;top:1817px;font-size:39px;line-height:43px;color:#262534;font-weight:700;transform:scaleX(0.954);transform-origin:0 50%;">Recent History</span>
<span class="t" style="left:2718.8px;top:1831px;font-size:29.0px;line-height:32px;color:#4f4e5c;letter-spacing:0.26px;-webkit-text-stroke:0.3px #4f4e5c;">Browse All</span>
</div></div>
</div></div>
<div id="wborder"></div>
</body></html>
